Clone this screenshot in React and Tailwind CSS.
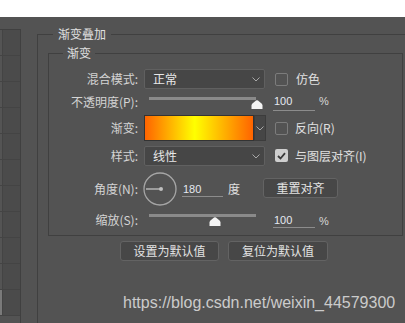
import React from 'react'

const cjk = { fontFamily: '"Noto Sans CJK SC", "Noto Sans", sans-serif' }
const lbl = "w-[89px] shrink-0 text-right text-[12px] leading-[14px] text-[#d4d4d4]"

function Chevron(){
  return (
    <svg width="8" height="5" viewBox="0 0 8 5" className="shrink-0">
      <path d="M0.5 0.5 L4 4 L7.5 0.5" fill="none" stroke="#a8a8a8" strokeWidth="1" />
    </svg>
  )
}

function Select({ value }){
  return (
    <div className="ml-[6px] w-[121px] h-[20px] bg-[#464646] border border-[#606060] rounded-[2px] flex items-center justify-between pl-[8px] pr-[4px]">
      <span className="text-[12px] leading-[14px] text-[#e8e8e8]">{value}</span>
      <Chevron/>
    </div>
  )
}

function Check({ on }){
  return on ? (
    <div className="w-[13px] h-[13px] rounded-[2px] bg-[#cfcfcf] flex items-center justify-center">
      <svg width="9" height="8" viewBox="0 0 9 8"><path d="M1 4 L3.5 6.5 L8 1.2" fill="none" stroke="#3a3a3a" strokeWidth="1.8"/></svg>
    </div>
  ) : (
    <div className="w-[13px] h-[13px] rounded-[2px] border border-[#7c7c7c]" />
  )
}

function Thumb(){
  return (
    <svg width="12" height="9" viewBox="0 0 12 9">
      <path d="M0.5 9 L0.5 5.5 Q0.5 4.5 1.5 3.6 L5 0.6 Q6 -0.2 7 0.6 L10.5 3.6 Q11.5 4.5 11.5 5.5 L11.5 9 Z" fill="#f4f4f4"/>
    </svg>
  )
}

function Slider({ pos, trackTop, thumbTop }){
  return (
    <div className="relative ml-[11px] w-[114px] h-full shrink-0">
      <div className="absolute left-0 w-[107px] h-[3px] bg-[#8a8a8a]" style={{ top: trackTop }} />
      <div className="absolute" style={{ left: pos, top: thumbTop }}><Thumb/></div>
    </div>
  )
}

function Num({ v, w, cls }){
  return (
    <div className={"border-b border-[#8c8c8c] pl-[1px] text-[11px] leading-[14px] text-[#e4e8f0] " + w + " " + cls} style={{ fontFamily: '"Liberation Sans", Arial, sans-serif' }}>{v}</div>
  )
}

function Btn({ children, w }){
  return (
    <div className={"h-[20px] bg-[#474747] border border-[#636363] rounded-[3px] flex items-center justify-center text-[12px] leading-[14px] text-[#e2e2e2] " + w}>{children}</div>
  )
}

export default function App(){
  const rows = [0,1,2,3,4,5,6,7,8,9,10]
  return (
    <div className="w-[405px] h-[323px] overflow-hidden bg-white flex flex-col" style={cjk}>
      <div className="h-[17px] shrink-0" />
      <div className="flex-1 bg-[#535353] flex min-h-0">
        <div className="mt-[12px] w-[21px] shrink-0 border-t border-r border-[#404040] flex flex-col">
          {rows.map(i => (
            <div key={i} className={"h-[26px] shrink-0 border-b border-[#444] flex " + (i === 10 ? "" : "")}>
              <div className={"w-[3px] border-r border-[#444] " + (i === 10 ? "bg-[#7a7a7a]" : "bg-[#545454]")} />
              <div className="flex-1 bg-[#4b4b4b]" />
            </div>
          ))}
        </div>
        <div className="w-[16px] shrink-0" />
        <fieldset className="mt-[10px] w-[420px] shrink-0 border-l border-t border-[#404040] min-w-0">
          <legend className="ml-[15px] px-[5px] text-[12px] leading-[14px] text-[#e0e0e0]">渐变叠加</legend>
          <fieldset className="ml-[10px] mt-[5px] w-[355px] border border-[#404040] pb-[5px] min-w-0">
            <legend className="ml-[14px] px-[4px] text-[12px] leading-[14px] text-[#e0e0e0]">渐变</legend>

            {/* 混合模式 */}
            <div className="mt-[9px] h-[20px] flex items-start">
              <div className={lbl + " mt-[3px]"}>混合模式:</div>
              <Select value="正常"/>
              <div className="ml-[10px] mt-[4px]"><Check/></div>
              <div className="ml-[8px] mt-[3px] text-[12px] leading-[14px] text-[#e0e0e0]">仿色</div>
            </div>

            {/* 不透明度 */}
            <div className="h-[24px] flex items-start">
              <div className={lbl + " mt-[6px]"}>不透明度(P):</div>
              <Slider pos={102} trackTop={8} thumbTop={11}/>
              <Num v="100" w="w-[42px]" cls="ml-[10px] mt-[4px] h-[18px] pt-[1px]"/>
              <div className="ml-[4px] mt-[5px] text-[11px] leading-[14px] text-[#d8d8d8]" style={{ fontFamily: '"Liberation Sans", Arial, sans-serif' }}>%</div>
            </div>

            {/* 渐变 */}
            <div className="mt-[2px] h-[26px] flex items-start">
              <div className={lbl + " mt-[6px]"}>渐变:</div>
              <div className="ml-[6px] w-[110px] h-[26px] border border-[#333] bg-[linear-gradient(to_right,#ff6400,#ffff00_46%,#ff6400)]" />
              <div className="w-[12px] h-[26px] bg-[#464646] border border-[#3c3c3c] flex items-center justify-center"><Chevron/></div>
              <div className="ml-[9px] mt-[7px]"><Check/></div>
              <div className="ml-[7px] mt-[6px] text-[12px] leading-[14px] text-[#e0e0e0]">反向(R)</div>
            </div>

            {/* 样式 */}
            <div className="mt-[5px] h-[20px] flex items-start">
              <div className={lbl + " mt-[3px]"}>样式:</div>
              <Select value="线性"/>
              <div className="ml-[10px] mt-[3px]"><Check on/></div>
              <div className="ml-[7px] mt-[3px] text-[12px] leading-[14px] text-[#e0e0e0]">与图层对齐(I)</div>
            </div>

            {/* 角度 */}
            <div className="mt-[7px] h-[32px] flex items-start">
              <div className={lbl + " mt-[9px]"}>角度(N):</div>
              <svg width="34" height="34" viewBox="0 0 34 34" className="ml-[5px] -mt-[1px] shrink-0">
                <circle cx="17" cy="17" r="16" fill="none" stroke="#a6a6a6" strokeWidth="1.3"/>
                <line x1="3" y1="17" x2="18" y2="17" stroke="#b4b4b4" strokeWidth="1.5"/>
                <circle cx="18" cy="17" r="2" fill="#c0c0c0"/>
              </svg>
              <Num v="180" w="w-[41px]" cls="ml-[5px] mt-[7px] h-[17px] pt-[2px]"/>
              <div className="ml-[5px] mt-[9px] text-[12px] leading-[14px] text-[#e0e0e0]">度</div>
              <div className="ml-[23px] mt-[5px]"><Btn w="w-[75px]">重置对齐</Btn></div>
            </div>

            {/* 缩放 */}
            <div className="mt-[5px] h-[20px] flex items-start">
              <div className={lbl + " mt-[3px]"}>缩放(S):</div>
              <Slider pos={60} trackTop={4} thumbTop={7}/>
              <Num v="100" w="w-[42px]" cls="ml-[10px] h-[18px] pt-[3px]"/>
              <div className="ml-[4px] mt-[4px] text-[11px] leading-[14px] text-[#d8d8d8]" style={{ fontFamily: '"Liberation Sans", Arial, sans-serif' }}>%</div>
            </div>
          </fieldset>

          <div className="mt-[5px] pl-[82px] flex gap-[9px]">
            <Btn w="w-[99px]">设置为默认值</Btn>
            <Btn w="w-[100px]">复位为默认值</Btn>
          </div>

          <div className="mt-[33px] pl-[85px] text-[16px] leading-[18px] text-[#cbcbcb] whitespace-nowrap" style={{ fontFamily: '"Liberation Sans", Arial, sans-serif' }}>
            https://blog.csdn.net/weixin_44579300
          </div>
        </fieldset>
      </div>
    </div>
  )
}
